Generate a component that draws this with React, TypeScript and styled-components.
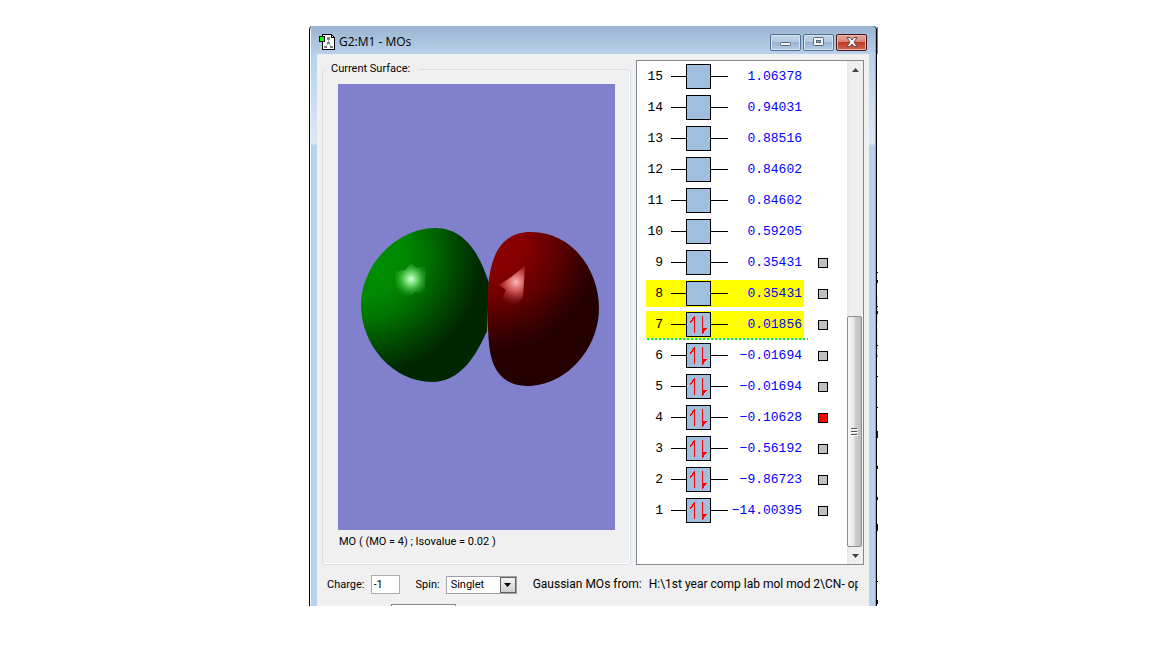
import React, { useState } from "react";
import styled, { createGlobalStyle } from "styled-components";

const GlobalStyle = createGlobalStyle`
  * { box-sizing: border-box; }
  body { margin: 0; background: #fff; color: #000; font: 12px/16px "Open Sans", "Noto Sans", sans-serif; }
`;

const Page = styled.main`
  display: flex;
  align-items: stretch;
  padding: 26px 274px 42px 309px;
`;

const Window = styled.section`
  flex: 1;
  min-width: 0;
  display: flex;
  flex-direction: column;
  border-left: 1px solid #000;
  border-right: 1px solid #000;
  border-radius: 4px 4px 0 0;
  background: linear-gradient(#99b4d1, #b9d1ea 28px, #dce8f6 118px, #b9d1ea 119px);
  box-shadow: inset 1px 0 #eef6fd, inset -1px 0 #35c8ea;
`;

const TitleBar = styled.header`
  display: flex;
  align-items: center;
  height: 28px;
  padding: 4px 9px 0 9px;
  gap: 4px;
`;

const Title = styled.h1`
  flex: 1;
  margin: 0;
  font-size: 12px;
  line-height: 16px;
  font-weight: 400;
`;

const WindowButtons = styled.div`
  display: flex;
  gap: 2px;
`;

const WindowButton = styled.button<{ $close?: boolean }>`
  display: flex;
  align-items: center;
  justify-content: center;
  width: 31px;
  height: 17px;
  padding: 0;
  border: 1px solid ${(p) => (p.$close ? "#48141c" : "#566f8e")};
  border-radius: 2px;
  background: ${(p) =>
    p.$close
      ? "linear-gradient(#e8a79b, #d98475 45%, #bd3a22 50%, #cf6a50)"
      : "linear-gradient(#c3d6ea, #b4cae2 45%, #98b3d0 50%, #b5cde6)"};
  box-shadow: inset 0 0 0 1px ${(p) => (p.$close ? "#eab5aa" : "#d5e4f3")};
`;

const Client = styled.div`
  margin: 0 7px;
  padding: 6px 5px 0;
  background: #f0f0f0;
`;

const Panels = styled.div`
  display: flex;
  gap: 5px;
`;

const Group = styled.fieldset`
  flex: 1;
  min-width: 0;
  margin: 0;
  padding: 0 3px;
  border: 1px solid #d5dfe5;
  border-radius: 3px;
  box-shadow: inset -1px -1px #fff;
`;

const Legend = styled.legend`
  padding: 0 8px 0 5px;
  font: 11px/18px Roboto, Arial, sans-serif;
`;

const GroupBody = styled.div`
  padding: 6px 12px 10px;
`;

const Viewport = styled.div`
  display: flex;
  justify-content: center;
  height: 446px;
  background: #8080cc;
`;

const Caption = styled.p`
  margin: 0;
  padding-left: 1px;
  font: 11px/24px Roboto, Arial, sans-serif;
`;

const ListBox = styled.div`
  display: flex;
  width: 228px;
  border: 1px solid #828790;
  background: #fff;
`;

const Levels = styled.ul`
  flex: 1;
  margin: 0;
  padding: 0 0 0 9px;
  list-style: none;
`;

const Level = styled.li`
  display: flex;
  align-items: center;
  gap: 14px;
  height: 31px;
`;

const LevelBody = styled.div<{ $marked: boolean; $homo: boolean }>`
  position: relative;
  display: flex;
  align-items: center;
  width: 158px;
  height: 27px;
  padding-right: 2px;
  background: ${(p) => (p.$marked ? "#ff0" : "transparent")};
  font: 13px/27px "Liberation Mono", monospace;
  &::after {
    content: "";
    display: ${(p) => (p.$homo ? "block" : "none")};
    position: absolute;
    left: 1px;
    right: -4px;
    top: 100%;
    height: 2px;
    background: repeating-linear-gradient(90deg, #0f0 0 2px, #fff 2px 4px);
  }
`;

const Index = styled.span`
  width: 17px;
  margin-right: 8px;
  text-align: right;
`;

const Energy = styled.span`
  flex: 1;
  text-align: right;
  color: #00f;
`;

const Orbital = styled.svg`
  flex: none;
  display: block;
  margin-right: -12px;
`;

const Marker = styled.input`
  appearance: none;
  width: 10px;
  height: 10px;
  margin: 0;
  border: 1px solid #000;
  background: #c0c0c0;
  &:checked { background: #f00; }
`;

const ScrollBar = styled.div`
  display: flex;
  flex-direction: column;
  width: 16px;
  background: linear-gradient(90deg, #e6e6e6, #f0f0f0 20%, #efefef);
`;

const ScrollButton = styled.button`
  display: flex;
  align-items: center;
  justify-content: center;
  height: 17px;
  padding: 0;
  border: 0;
  background: transparent;
`;

const ScrollGap = styled.div`
  flex: 239;
`;

const ScrollThumb = styled.div`
  flex: 229;
  display: flex;
  align-items: center;
  justify-content: center;
  margin-right: 1px;
  border: 1px solid #8e8e8e;
  border-radius: 2px;
  background: linear-gradient(90deg, #f6f6f6, #e8e8ea 45%, #cfcfd1 55%, #bcbcc0);
`;

const Controls = styled.form`
  display: flex;
  align-items: center;
  height: 19px;
  margin-top: 10px;
  padding: 0 6px 0 5px;
`;

const Field = styled.label`
  display: flex;
  align-items: center;
  gap: 6px;
  margin-right: 16px;
  font: 11px/19px Roboto, Arial, sans-serif;
`;

const NumberBox = styled.input`
  width: 29px;
  height: 19px;
  padding: 0 2px;
  border: 1px solid #abadb3;
  background: #fff;
  font: inherit;
  border-radius: 0;
`;

const SelectFrame = styled.span`
  display: flex;
  width: 71px;
  height: 18px;
  border: 1px solid #a0a0a8;
  background: #fff;
`;

const SpinSelect = styled.select`
  flex: 1;
  min-width: 0;
  padding: 0 0 0 4px;
  border: 0;
  appearance: none;
  background: transparent;
  font: 11px/16px Roboto, Arial, sans-serif;
`;

const DropArrow = styled.span`
  display: flex;
  align-items: center;
  justify-content: center;
  width: 16px;
  border: 1px solid #606060;
  background: linear-gradient(#f4f4f4, #cfcfcf);
`;

const Source = styled.p`
  flex: 1;
  min-width: 0;
  display: flex;
  gap: 7px;
  margin: 0;
  overflow: hidden;
  white-space: nowrap;
  font: 12px/19px Roboto, Arial, sans-serif;
`;

const NextRow = styled.div`
  height: 2px;
  margin: 10px 0 0 69px;
  overflow: hidden;
`;

const NextBox = styled.div`
  width: 65px;
  height: 19px;
  border: 1px solid #828790;
  background: #fff;
`;

const Backdrop = styled.svg`
  flex: none;
  width: 1px;
`;

const LEVELS = [
  "1.06378", "0.94031", "0.88516", "0.84602", "0.84602", "0.59205", "0.35431", "0.35431",
  "0.01856", "−0.01694", "−0.01694", "−0.10628", "−0.56192", "−9.86723", "−14.00395",
].map((energy, i) => ({ n: 15 - i, energy }));

function OrbitalBox({ filled }: { filled: boolean }) {
  return (
    <Orbital width="57" height="25" viewBox="0 0 57 25" aria-hidden="true">
      <path d="M0 12.5H57" stroke="#000" />
      <rect x="15.5" y=".5" width="24" height="24" fill="#a0bfdf" stroke="#000" />
      {filled && (
        <>
          <path d="M23.5 4V21M31.5 4V22" stroke="#f00" strokeWidth="1" />
          <path fill="#f00" d="M24 4V7H22V9H21V10H20V11H19V9H20V8H21V6H22V5H23V4ZM31 22V15H32V16H33V16H36V17H35V18H34V19H33V21H32V22Z" />
        </>
      )}
    </Orbital>
  );
}

function Surface() {
  return (
    <svg width="277" height="446" viewBox="0 0 277 446" role="img" aria-label="Molecular orbital 4">
      <defs>
        <radialGradient id="green" gradientUnits="userSpaceOnUse" cx="25" cy="172" r="120">
          <stop offset="0" stopColor="#009000" />
          <stop offset=".35" stopColor="#008800" />
          <stop offset=".55" stopColor="#007000" />
          <stop offset=".8" stopColor="#004400" />
          <stop offset="1" stopColor="#002600" />
        </radialGradient>
        <radialGradient id="red" gradientUnits="userSpaceOnUse" cx="152" cy="158" r="112">
          <stop offset="0" stopColor="#8e0000" />
          <stop offset=".3" stopColor="#860000" />
          <stop offset=".6" stopColor="#600000" />
          <stop offset=".85" stopColor="#360000" />
          <stop offset="1" stopColor="#240000" />
        </radialGradient>
        <radialGradient id="greenGlow" gradientUnits="userSpaceOnUse" cx="73" cy="195" r="19">
          <stop offset="0" stopColor="#d8ffd8" />
          <stop offset=".35" stopColor="#70e070" stopOpacity=".9" />
          <stop offset="1" stopColor="#20a020" stopOpacity="0" />
        </radialGradient>
        <radialGradient id="redGlow" gradientUnits="userSpaceOnUse" cx="178" cy="198" r="24">
          <stop offset="0" stopColor="#ffb8b8" />
          <stop offset=".4" stopColor="#e06868" stopOpacity=".8" />
          <stop offset="1" stopColor="#a02020" stopOpacity="0" />
        </radialGradient>
      </defs>
      <path fill="url(#green)" d="M23 221C23 180 60 144 97 144C128 144 142 172 151 199L149 247C138 272 122 298 94 298C56 298 23 262 23 221Z" />
      <path fill="url(#greenGlow)" d="M73 179L79 184L90 180L87 194L88 211L78 208L69 214L63 212L57 204L57 188L67 186Z" />
      <path fill="url(#red)" d="M193 148C235 148 261 187 261 224C261 265 228 302 189 302C169 302 157 290 153 272C149 256 149 215 151 195C154 172 163 148 193 148Z" />
      <path fill="url(#redGlow)" d="M161 201L173 193L187 182L185 213L176 224L163 216L168 206Z" />
    </svg>
  );
}

export default function App() {
  const [selected, setSelected] = useState(4);
  return (
    <>
      <GlobalStyle />
      <Page>
        <Window>
          <TitleBar>
            <svg width="16" height="16" viewBox="0 0 16 16" shapeRendering="crispEdges" aria-hidden="true">
              <path d="M3.5 .5H12.5L15.5 3.5V15.5H3.5Z" fill="#fff" stroke="#000" />
              <path d="M12.5 .5V3.5H15.5" fill="none" stroke="#000" />
              <path d="M9.5 5V9L6.5 13M9.5 9L12.5 13" fill="none" stroke="#aaa" />
              <path d="M8 3h3v3H8zM8 8h3v2H8zM5 12h3v2H5zM11 12h3v2h-3z" fill="#808080" />
              <rect x=".5" y="2.5" width="5" height="5" fill="#0f0" stroke="#000" />
            </svg>
            <Title>G2:M1 - MOs</Title>
            <WindowButtons>
              <WindowButton aria-label="Minimize">
                <svg width="12" height="10" viewBox="0 0 12 10">
                  <rect x=".5" y="5.5" width="10" height="3" rx="1" fill="#f4f4f4" stroke="#5b6472" />
                </svg>
              </WindowButton>
              <WindowButton aria-label="Maximize">
                <svg width="12" height="10" viewBox="0 0 12 10">
                  <rect x=".5" y=".5" width="10" height="8" rx="1" fill="#f4f4f4" stroke="#5b6472" />
                  <rect x="3.5" y="3.5" width="4" height="2" fill="#8fa9c6" stroke="#5b6472" />
                </svg>
              </WindowButton>
              <WindowButton $close aria-label="Close">
                <svg width="12" height="10" viewBox="0 0 12 10">
                  <path d="M1 .5H4L6 3L8 .5H11L8 5L11 9.5H8L6 7L4 9.5H1L4 5Z" fill="#f6f6f6" stroke="#5b4a58" />
                </svg>
              </WindowButton>
            </WindowButtons>
          </TitleBar>
          <Client>
            <Panels>
              <Group>
                <Legend>Current Surface:</Legend>
                <GroupBody>
                  <Viewport>
                    <Surface />
                  </Viewport>
                  <Caption>MO ( (MO = 4) ; Isovalue = 0.02 )</Caption>
                </GroupBody>
              </Group>
              <ListBox>
                <Levels>
                  {LEVELS.map(({ n, energy }) => (
                    <Level key={n}>
                      <LevelBody $marked={n === 7 || n === 8} $homo={n === 7}>
                        <Index>{n}</Index>
                        <OrbitalBox filled={n <= 7} />
                        <Energy>{energy}</Energy>
                      </LevelBody>
                      {n <= 9 && (
                        <Marker
                          type="checkbox"
                          aria-label={`Orbital ${n}`}
                          checked={selected === n}
                          onChange={() => setSelected(n)}
                        />
                      )}
                    </Level>
                  ))}
                </Levels>
                <ScrollBar>
                  <ScrollButton aria-label="Scroll up">
                    <svg width="7" height="4" viewBox="0 0 7 4"><path d="M0 4L3.5 0L7 4Z" fill="#444" /></svg>
                  </ScrollButton>
                  <ScrollGap />
                  <ScrollThumb>
                    <svg width="7" height="8" viewBox="0 0 7 8" shapeRendering="crispEdges">
                      <path d="M0 .5H6M0 3.5H6M0 6.5H6" stroke="#555" />
                      <path d="M1 1.5H7M1 4.5H7M1 7.5H7" stroke="#fff" />
                    </svg>
                  </ScrollThumb>
                  <ScrollButton aria-label="Scroll down">
                    <svg width="7" height="4" viewBox="0 0 7 4"><path d="M0 0L3.5 4L7 0Z" fill="#444" /></svg>
                  </ScrollButton>
                </ScrollBar>
              </ListBox>
            </Panels>
            <Controls>
              <Field>
                Charge:
                <NumberBox type="text" defaultValue="-1" />
              </Field>
              <Field>
                Spin:
                <SelectFrame>
                  <SpinSelect defaultValue="Singlet">
                    <option>Singlet</option>
                  </SpinSelect>
                  <DropArrow>
                    <svg width="7" height="4" viewBox="0 0 7 4"><path d="M0 0L3.5 4L7 0Z" fill="#000" /></svg>
                  </DropArrow>
                </SelectFrame>
              </Field>
              <Source>
                <span>Gaussian MOs from:</span>
                <span>{"H:\\1st year comp lab mol mod 2\\CN- op"}</span>
              </Source>
            </Controls>
            <NextRow>
              <NextBox />
            </NextRow>
          </Client>
        </Window>
        <Backdrop viewBox="0 0 1 580" preserveAspectRatio="none" shapeRendering="crispEdges" aria-hidden="true">
          <path fill="#000" d="M0 1h1v27H0z" opacity=".5" />
          <path fill="#ff0" d="M0 271h1v27H0zM0 302h1v27H0z" />
          <path fill="#0f0" d="M0 329h1v2H0z" />
          <path
            fill="#00c"
            d="M0 246h1v1H0zM0 254h1v3H0zM0 280h1v1H0zM0 285h1v3H0zM0 319h1v1H0zM0 350h1v1H0zM0 381h1v1H0zM0 405h1v7H0zM0 440h1v3H0zM0 471h1v3H0zM0 498h1v7H0z"
          />
          <path fill="#000" d="M0 555h1v1H0zM0 574h1v4H0z" />
        </Backdrop>
      </Page>
    </>
  );
}
